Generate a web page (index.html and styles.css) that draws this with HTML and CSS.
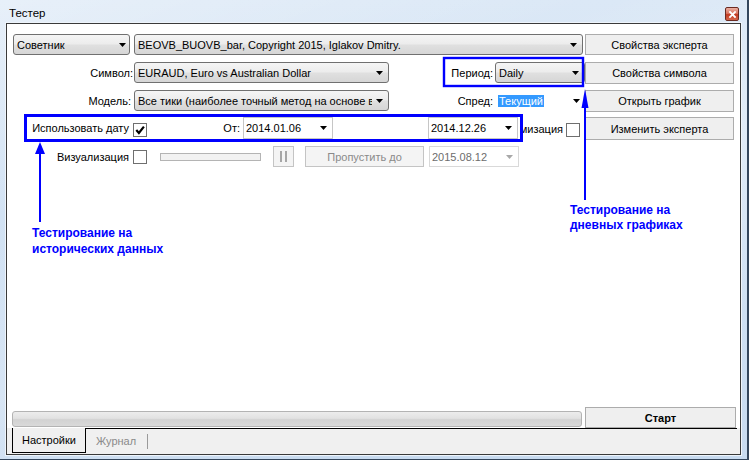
FILE: index.html
```html
<!DOCTYPE html>
<html lang="ru">
<head>
<meta charset="utf-8">
<title>Тестер</title>
<link rel="stylesheet" href="styles.css">
</head>
<body>
<div class="window">
  <div class="titlebar">
    <span class="title">Тестер</span>
    <span class="close"><svg width="11" height="11" viewBox="0 0 11 11"><path d="M3 3 L8 8 M8 3 L3 8" stroke="#fff" stroke-width="1.8" stroke-linecap="square"/></svg></span>
  </div>
  <div class="client">
    <div class="panel">
      <div class="grid">
        <!-- row 1 -->
        <div class="combo c-type"><span class="ctext">Советник</span></div>
        <div class="combo c-expert"><span class="ctext">BEOVB_BUOVB_bar, Copyright 2015, Iglakov Dmitry.</span></div>
        <button class="btn">Свойства эксперта</button>
        <!-- row 2 -->
        <div class="lbl l-sym">Символ:</div>
        <div class="cell">
          <div class="combo c-wide"><span class="ctext">EURAUD, Euro vs Australian Dollar</span></div>
          <div class="lbl2">Период:</div>
          <div class="combo c-small"><span class="ctext">Daily</span></div>
        </div>
        <button class="btn b-tall">Свойства символа</button>
        <!-- row 3 -->
        <div class="lbl l-model">Модель:</div>
        <div class="cell">
          <div class="combo c-wide"><span class="ctext">Все тики (наиболее точный метод на основе в</span></div>
          <div class="lbl2">Спред:</div>
          <div class="spread"><span class="sel">Текущий</span></div>
        </div>
        <button class="btn b-tall">Открыть график</button>
        <!-- row 4 -->
        <div class="lbl l-chk">Использовать дату</div>
        <div class="cell">
          <span class="check on"><svg width="12" height="12" viewBox="0 0 12 12"><path d="M2.3 6 L4.9 9 L9.9 2.6" fill="none" stroke="#000" stroke-width="2.2"/></svg></span>
          <span class="from">От:</span>
          <div class="date d-from"><span class="ctext">2014.01.06</span></div>
          <div class="date d-to"><span class="ctext">2014.12.26</span></div>
          <span class="optim">мизация</span>
          <span class="check c-opt"></span>
        </div>
        <button class="btn b-tall2">Изменить эксперта</button>
        <!-- row 5 -->
        <div class="lbl l-chk">Визуализация</div>
        <div class="cell">
          <span class="check"></span>
          <span class="slider"></span>
          <button class="btn off pause" disabled><span class="bars"></span></button>
          <button class="btn off skip" disabled>Пропустить до</button>
          <div class="date off d-skip"><span class="ctext">2015.08.12</span></div>
        </div>
      </div>
      <div class="bottom">
        <div class="progress"></div>
        <button class="btn start">Старт</button>
      </div>
    </div>
    <div class="tabs">
      <div class="tab">Настройки</div>
      <div class="tabrest">
        <span class="tab2">Журнал</span>
        <span class="tabsep"></span>
      </div>
    </div>
  </div>

  <svg class="overlay" width="749" height="460" viewBox="0 0 749 460">
    <rect x="25.5" y="115.5" width="496" height="25" fill="none" stroke="#0000ff" stroke-width="3"/>
    <rect x="444" y="58" width="139" height="28" fill="none" stroke="#0000ff" stroke-width="2.4"/>
    <line x1="40" y1="150" x2="40" y2="222" stroke="#0000ff" stroke-width="2"/>
    <polygon points="40,142 35,154 45,154" fill="#0000ff"/>
    <line x1="585" y1="102" x2="585" y2="200" stroke="#0000ff" stroke-width="2"/>
    <polygon points="585,89 581.5,108 588.5,108" fill="#0000ff"/>
  </svg>
  <div class="note n-hist">Тестирование на<br>исторических данных</div>
  <div class="note n-day">Тестирование на<br>дневных графиках</div>
</div>
</body>
</html>
```

FILE: styles.css
```css
* { box-sizing: border-box; }
html, body { margin: 0; padding: 0; }
body {
  width: 749px;
  height: 460px;
  overflow: hidden;
  font-family: "Liberation Sans", Arial, sans-serif;
  font-size: 11px;
  color: #000;
  background: #c9dbef;
}
button { font: inherit; color: inherit; margin: 0; padding: 0; }

.window {
  position: relative;
  width: 749px;
  height: 460px;
  display: flex;
  flex-direction: column;
  background:
    linear-gradient(160deg, rgba(255,255,255,0.35) 0%, rgba(255,255,255,0) 30%, rgba(255,255,255,0.25) 55%, rgba(255,255,255,0) 80%),
    linear-gradient(180deg, #dbe8f6 0%, #c8dbf0 100%);
  border-right: 2px solid #34465c;
  border-bottom: 1px solid #34465c;
}

.titlebar {
  height: 23px;
  display: flex;
  align-items: flex-start;
  flex-shrink: 0;
}
.title {
  margin: 7px 0 0 9px;
  font-size: 11.5px;
  line-height: 13px;
}
.close {
  margin: 7px 8px 0 auto;
  width: 14px;
  height: 14px;
  border: 1px solid #6b2b22;
  border-radius: 2px;
  background: linear-gradient(180deg, #eab0a3 0%, #d9735f 45%, #c23a20 55%, #d4644a 100%);
  display: flex;
  align-items: center;
  justify-content: center;
}
.close svg { display: block; }

.client {
  margin-left: 6px;
  width: 735px;
  height: 432px;
  border: 1px solid #3a3a3a;
  box-shadow: 0 0 0 1px #eef4fb;
  background: #f0f0f0;
  display: flex;
  flex-direction: column;
}

.panel {
  height: 404px;
  flex-shrink: 0;
  background: #fff;
  padding: 10px 6px 0 6px;
  display: flex;
  flex-direction: column;
}

.grid {
  display: grid;
  grid-template-columns: 121px 451px 149px;
  grid-template-rows: 21px 21px 20px 22px 21px;
  row-gap: 7px;
  align-items: start;
}

.cell {
  display: flex;
  align-items: center;
  height: 21px;
}

/* combo boxes */
.combo, .spread, .date {
  height: 21px;
  display: flex;
  align-items: center;
  padding-left: 3px;
  white-space: nowrap;
  flex-shrink: 0;
}
.combo {
  border: 1px solid #707070;
  border-radius: 3px;
  background: linear-gradient(180deg, #f5f5f5 0%, #ececec 48%, #e0e0e0 52%, #d6d6d6 100%);
}
.ctext {
  flex: 1;
  min-width: 0;
  overflow: hidden;
  white-space: nowrap;
}
.combo::after, .spread::after, .date::after {
  content: "";
  flex-shrink: 0;
  width: 7px;
  height: 4px;
  margin: 1px 5px 0 6px;
  background: #000;
  clip-path: polygon(0 0, 100% 0, 50% 100%);
}
.c-type { width: 117px; }
.c-type::after { margin-right: 3px; }
.c-expert { width: 449px; }
.c-wide { width: 255px; }
.c-wide::after { margin-left: 4px; }
.c-small { width: 90px; }

.spread {
  width: 90px;
  background: #fff;
  padding-left: 3px;
}
.spread::after { margin-left: auto; }
.sel {
  background: #3399ff;
  color: #fff;
  padding: 0 1px;
  line-height: 12px;
  display: inline-block;
}

.lbl {
  height: 21px;
  display: flex;
  align-items: center;
  justify-content: flex-end;
  white-space: nowrap;
}
.l-sym { padding-right: 1px; }
.l-model { padding-right: 3px; }
.l-chk { padding-right: 5px; }
.lbl2 {
  margin-left: auto;
  margin-right: 2px;
  white-space: nowrap;
}

/* buttons */
.btn {
  height: 21px;
  border: 1px solid #acacac;
  background: #efefef;
  display: flex;
  align-items: center;
  justify-content: center;
  flex-shrink: 0;
}
.grid > .btn { width: 149px; }
.b-tall { height: 22px; }
.b-tall2 { height: 23px; }
.btn.off {
  color: #8a8a8a;
  background: #f4f4f4;
  border-color: #c4c4c4;
}

/* checkboxes */
.check {
  width: 14px;
  height: 14px;
  border: 1px solid #6f6f6f;
  background: #fff;
  display: flex;
  align-items: center;
  justify-content: center;
  flex-shrink: 0;
  margin-left: -1px;
}
.check svg { display: block; }
.check.on { margin-top: 4px; }
.c-opt { margin-left: 3px; margin-top: 4px; }

.from {
  width: 20px;
  margin-left: 73px;
  text-align: right;
  flex-shrink: 0;
}
.date {
  width: 90px;
  height: 22px;
  border: 1px solid #c6c6c6;
  background: #fff;
  padding-left: 2px;
}
.d-from { margin-left: 3px; }
.d-to { margin-left: 95px; }
.date.off { color: #6d6d6d; border-color: #d9d9d9; height: 21px; }
.date.off::after { background: #a8a8a8; }
.d-skip { margin-left: 5px; }

.optim {
  width: 44px;
  margin-left: 1px;
  text-align: right;
  white-space: nowrap;
  flex-shrink: 0;
  margin-top: 3px;
}

.slider {
  width: 101px;
  height: 8px;
  margin-left: 13px;
  border: 1px solid #b4b4b4;
  background: #f2f2f2;
  flex-shrink: 0;
}
.pause {
  width: 21px;
  margin-left: 12px;
}
.bars {
  width: 7px;
  height: 11px;
  border-left: 2px solid #a6a6a6;
  border-right: 2px solid #a6a6a6;
}
.skip {
  width: 119px;
  margin-left: 11px;
}

/* bottom row */
.bottom {
  margin-top: auto;
  display: flex;
  align-items: flex-end;
}
.progress {
  width: 570px;
  height: 16px;
  margin: 0 0 1px -1px;
  flex-shrink: 0;
  border: 1px solid #b3b3b3;
  border-radius: 3px;
  background: linear-gradient(180deg, #ececec 0%, #e2e2e2 45%, #d2d2d2 55%, #d9d9d9 100%);
}
.start {
  width: 151px;
  margin-left: 3px;
  font-weight: bold;
}

/* tabs */
.tabs {
  height: 26px;
  display: flex;
  padding: 0 3px 0 5px;
  flex-shrink: 0;
}
.tab {
  width: 74px;
  height: 25px;
  border: 1px solid #000;
  border-top: none;
  background: #f0f0f0;
  padding-left: 9px;
  display: flex;
  align-items: center;
  flex-shrink: 0;
}
.tabrest {
  flex: 1;
  border-top: 1px solid #000;
  display: flex;
  align-items: center;
  height: 25px;
  padding-left: 10px;
}
.tab2 { color: #8a8a8a; }
.tabsep {
  width: 1px;
  height: 15px;
  background: #9a9a9a;
  margin-left: 11px;
}

/* annotations */
.overlay {
  position: absolute;
  left: 0;
  top: 0;
  pointer-events: none;
}
.note {
  position: absolute;
  font-weight: bold;
  font-size: 12px;
  line-height: 16px;
  color: #0000ff;
  white-space: nowrap;
}
.n-hist { left: 32px; top: 225px; }
.n-day { left: 570px; top: 203px; line-height: 15px; }
```
